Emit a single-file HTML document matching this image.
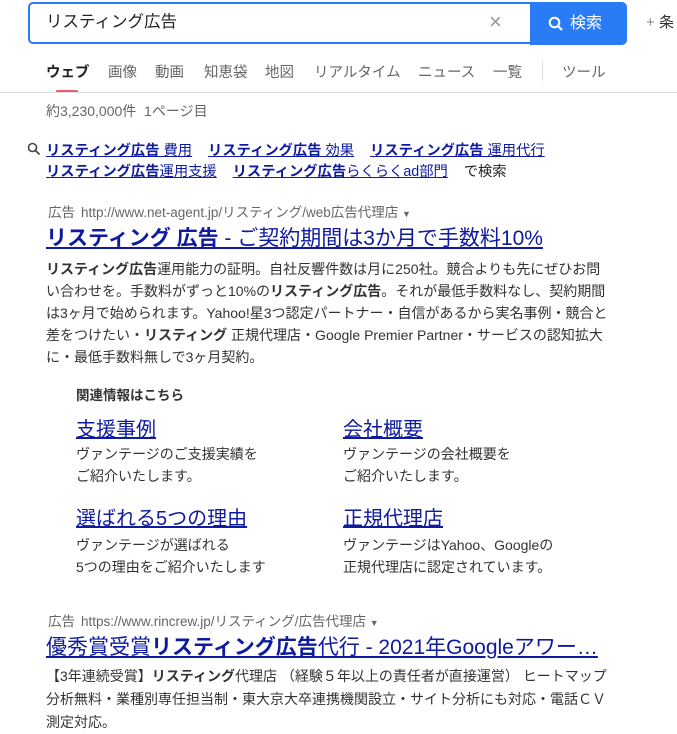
<!DOCTYPE html><html><head><meta charset="utf-8"><style>
body{margin:0;width:677px;height:733px;overflow:hidden;background:#fff;font-family:"Liberation Sans","Noto Sans CJK JP",sans-serif;color:#333;position:relative}
.a{position:absolute;white-space:nowrap;line-height:1.2}
.lk{color:#0e1aa0;text-decoration:underline}
.tab{position:absolute;top:61px;font-size:14.5px;color:#666}
.b{font-weight:bold}
.ad{font-size:13.5px;color:#666}
.ad b{color:#666;font-weight:normal;margin-right:6px}
.t{font-size:21px;color:#0e1aa0;text-decoration:underline}
.body{font-size:14px;line-height:22px;color:#333;white-space:normal}
.sl{font-size:20px;color:#0e1aa0;text-decoration:underline}
.sd{font-size:14px;line-height:22px;color:#333}
</style></head><body>
<div class="a" style="left:28px;top:2px;width:598px;height:42px;border:2px solid #2a7cf6;border-radius:5px;box-sizing:border-box"></div>
<div class="a" style="left:530px;top:2px;width:97px;height:43px;background:#2a7cf6;border-radius:0 5px 5px 0"></div>
<div class="a" style="left:46px;top:13px;font-size:16.5px;color:#222">リスティング広告</div>
<div class="a" style="left:489px;top:9px;font-size:22px;color:#999">×</div>
<svg class="a" style="left:548px;top:16px" width="16" height="16" viewBox="0 0 16 16"><circle cx="6.5" cy="6.5" r="4.8" fill="none" stroke="#fff" stroke-width="2"/><path d="M10 10l4 4" stroke="#fff" stroke-width="2.2"/></svg>
<div class="a" style="left:570px;top:14px;font-size:16px;color:#fff">検索</div>
<div class="a" style="left:646px;top:14px;font-size:15px;color:#888">+ <span style="color:#333">条</span></div>
<div class="tab b" style="left:46px;color:#222">ウェブ</div>
<div class="tab" style="left:108px">画像</div>
<div class="tab" style="left:155px">動画</div>
<div class="tab" style="left:204px">知恵袋</div>
<div class="tab" style="left:265px">地図</div>
<div class="tab" style="left:314px">リアルタイム</div>
<div class="tab" style="left:418px">ニュース</div>
<div class="tab" style="left:493px">一覧</div>
<div class="a" style="left:542px;top:61px;width:1px;height:20px;background:#ddd"></div>
<div class="tab" style="left:562px">ツール</div>
<div class="a" style="left:56px;top:90px;width:22px;height:3px;background:#f0576a;border-radius:2px"></div>
<div class="a" style="left:0;top:92px;width:677px;height:1px;background:#ddd"></div>
<div class="a" style="left:46px;top:103px;font-size:14px;color:#666">約3,230,000件&nbsp; 1ページ目</div>
<svg class="a" style="left:27px;top:142px" width="14" height="14" viewBox="0 0 14 14"><circle cx="5.5" cy="5.5" r="4" fill="none" stroke="#444" stroke-width="1.6"/><path d="M8.5 8.5l4 4" stroke="#444" stroke-width="1.8"/></svg>
<div class="a" style="left:46px;top:143px;font-size:14.3px"><span class="lk"><b>リスティング広告</b> 費用</span>&nbsp;&nbsp;&nbsp;&nbsp;<span class="lk"><b>リスティング広告</b> 効果</span>&nbsp;&nbsp;&nbsp;&nbsp;<span class="lk"><b>リスティング広告</b> 運用代行</span></div>
<div class="a" style="left:46px;top:164px;font-size:14.3px"><span class="lk"><b>リスティング広告</b>運用支援</span>&nbsp;&nbsp;&nbsp;&nbsp;<span class="lk"><b>リスティング広告</b>らくらくad部門</span>&nbsp;&nbsp;&nbsp;&nbsp;<span style="color:#222">で検索</span></div>
<div class="a ad" style="left:48px;top:205px"><b>広告</b>http://www.net-agent.jp/リスティング/web広告代理店 <span style="font-size:9px">▼</span></div>
<div class="a t" style="left:46px;top:226px"><b>リスティング 広告</b> - ご契約期間は3か月で手数料10%</div>
<div class="a body" style="left:46px;top:258px;width:562px"><b>リスティング広告</b>運用能力の証明。自社反響件数は月に250社。競合よりも先にぜひお問い合わせを。手数料がずっと10%の<b>リスティング広告</b>。それが最低手数料なし、契約期間は3ヶ月で始められます。Yahoo!星3つ認定パートナー・自信があるから実名事例・競合と差をつけたい・<b>リスティング</b> 正規代理店・Google Premier Partner・サービスの認知拡大に・最低手数料無しで3ヶ月契約。</div>
<div class="a b" style="left:76px;top:388px;font-size:13.5px">関連情報はこちら</div>
<div class="a sl" style="left:76px;top:418px">支援事例</div>
<div class="a sd" style="left:76px;top:443px">ヴァンテージのご支援実績を<br>ご紹介いたします。</div>
<div class="a sl" style="left:343px;top:418px">会社概要</div>
<div class="a sd" style="left:343px;top:443px">ヴァンテージの会社概要を<br>ご紹介いたします。</div>
<div class="a sl" style="left:76px;top:507px">選ばれる5つの理由</div>
<div class="a sd" style="left:76px;top:534px">ヴァンテージが選ばれる<br>5つの理由をご紹介いたします</div>
<div class="a sl" style="left:343px;top:507px">正規代理店</div>
<div class="a sd" style="left:343px;top:534px">ヴァンテージはYahoo、Googleの<br>正規代理店に認定されています。</div>
<div class="a ad" style="left:48px;top:614px"><b>広告</b>https://www.rincrew.jp/リスティング/広告代理店 <span style="font-size:9px">▼</span></div>
<div class="a t" style="left:46px;top:635px">優秀賞受賞<b>リスティング広告</b>代行 - 2021年Googleアワー…</div>
<div class="a body" style="left:46px;top:665px;width:570px;line-height:23px">【3年連続受賞】<b>リスティング</b>代理店 （経験５年以上の責任者が直接運営） ヒートマップ分析無料・業種別専任担当制・東大京大卒連携機関設立・サイト分析にも対応・電話ＣＶ測定対応。</div>
</body></html>
